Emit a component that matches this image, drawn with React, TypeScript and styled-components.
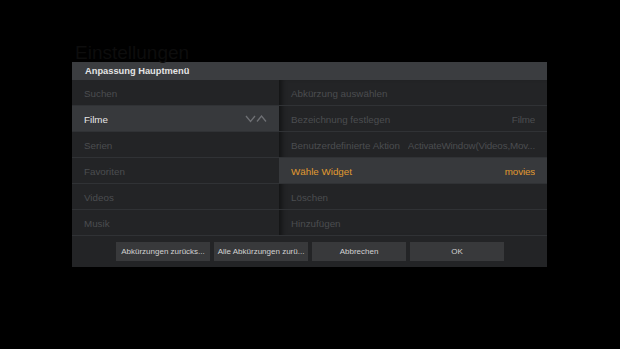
import * as React from 'react'
import styled, { createGlobalStyle } from 'styled-components'

const Global = createGlobalStyle`
  html, body {
    margin: 0;
    padding: 0;
    background: #000;
    width: 620px;
    height: 349px;
    overflow: hidden;
    font-family: "Liberation Sans", Arial, sans-serif;
  }
`

const Screen = styled.div`
  position: relative;
  width: 620px;
  height: 349px;
  background: #000;
`

const BackTitle = styled.div`
  padding: 44px 0 0 75px;
  font-size: 19px;
  color: #0d0d0d;
  height: 18px;
  line-height: 18px;
`

const Dialog = styled.div`
  margin-left: 72px;
  width: 475px;
  background: #232426;
  box-shadow: 0 0 6px rgba(0, 0, 0, 0.6);
`

const TitleBar = styled.div`
  height: 18px;
  background: #3b3d40;
  color: #e4e4e4;
  font-size: 9.3px;
  font-weight: bold;
  line-height: 18px;
  padding-left: 13px;
`

const Body = styled.div`
  display: grid;
  grid-template-columns: 207px 268px;
`

const Column = styled.div<{ $shade?: boolean }>`
  display: flex;
  flex-direction: column;
  position: relative;
  min-width: 0;
  ${(p) => p.$shade && `box-shadow: inset 6px 0 5px -3px rgba(0,0,0,0.45);`}
`

const Row = styled.div<{ $active?: boolean; $accent?: boolean }>`
  height: 25px;
  box-sizing: border-box;
  height: 26px;
  padding: 1px 12px 0;
  border-bottom: 1px solid #303235;
  display: flex;
  align-items: center;
  justify-content: space-between;
  gap: 5px;
  font-size: 9.8px;
  white-space: nowrap;
  background: ${(p) => (p.$active ? '#37393c' : 'transparent')};
  color: ${(p) => (p.$accent ? '#e09a30' : p.$active ? '#e6e6e6' : '#4b4d50')};
`

const Label = styled.span`
  flex-shrink: 0;
`

const Value = styled.span`
  white-space: nowrap;
  overflow: hidden;
  min-width: 0;
  letter-spacing: -0.15px;
`

const Footer = styled.div`
  height: 31px;
  display: flex;
  justify-content: center;
  align-items: center;
  gap: 4px;
  padding-left: 1px;
`

const Button = styled.div`
  width: 94px;
  height: 19px;
  background: #38393b;
  color: #d2d2d2;
  font-size: 8px;
  line-height: 19px;
  text-align: center;
  white-space: nowrap;
`

const Chevrons = () => (
  <svg width="22" height="8" viewBox="0 0 22 8">
    <polyline points="1,1 5.5,6.5 10,1" fill="none" stroke="#6e7074" strokeWidth="1.3" />
    <polyline points="12,6.5 16.5,1 21,6.5" fill="none" stroke="#6e7074" strokeWidth="1.3" />
  </svg>
)

const leftItems = ['Suchen', 'Filme', 'Serien', 'Favoriten', 'Videos', 'Musik']

const rightItems: { label: string; value?: string; accent?: boolean }[] = [
  { label: 'Abkürzung auswählen' },
  { label: 'Bezeichnung festlegen', value: 'Filme' },
  { label: 'Benutzerdefinierte Aktion', value: 'ActivateWindow(Videos,Mov...' },
  { label: 'Wähle Widget', value: 'movies', accent: true },
  { label: 'Löschen' },
  { label: 'Hinzufügen' },
]

export default function App() {
  return (
    <Screen>
      <Global />
      <BackTitle>Einstellungen</BackTitle>
      <Dialog>
        <TitleBar>Anpassung Hauptmenü</TitleBar>
        <Body>
          <Column>
            {leftItems.map((item) => (
              <Row key={item} $active={item === 'Filme'}>
                <Label>{item}</Label>
                {item === 'Filme' && <Chevrons />}
              </Row>
            ))}
          </Column>
          <Column $shade>
            {rightItems.map((item) => (
              <Row key={item.label} $active={item.accent} $accent={item.accent}>
                <Label>{item.label}</Label>
                {item.value && <Value>{item.value}</Value>}
              </Row>
            ))}
          </Column>
        </Body>
        <Footer>
          <Button>Abkürzungen zurücks...</Button>
          <Button>Alle Abkürzungen zurü...</Button>
          <Button>Abbrechen</Button>
          <Button>OK</Button>
        </Footer>
      </Dialog>
    </Screen>
  )
}
